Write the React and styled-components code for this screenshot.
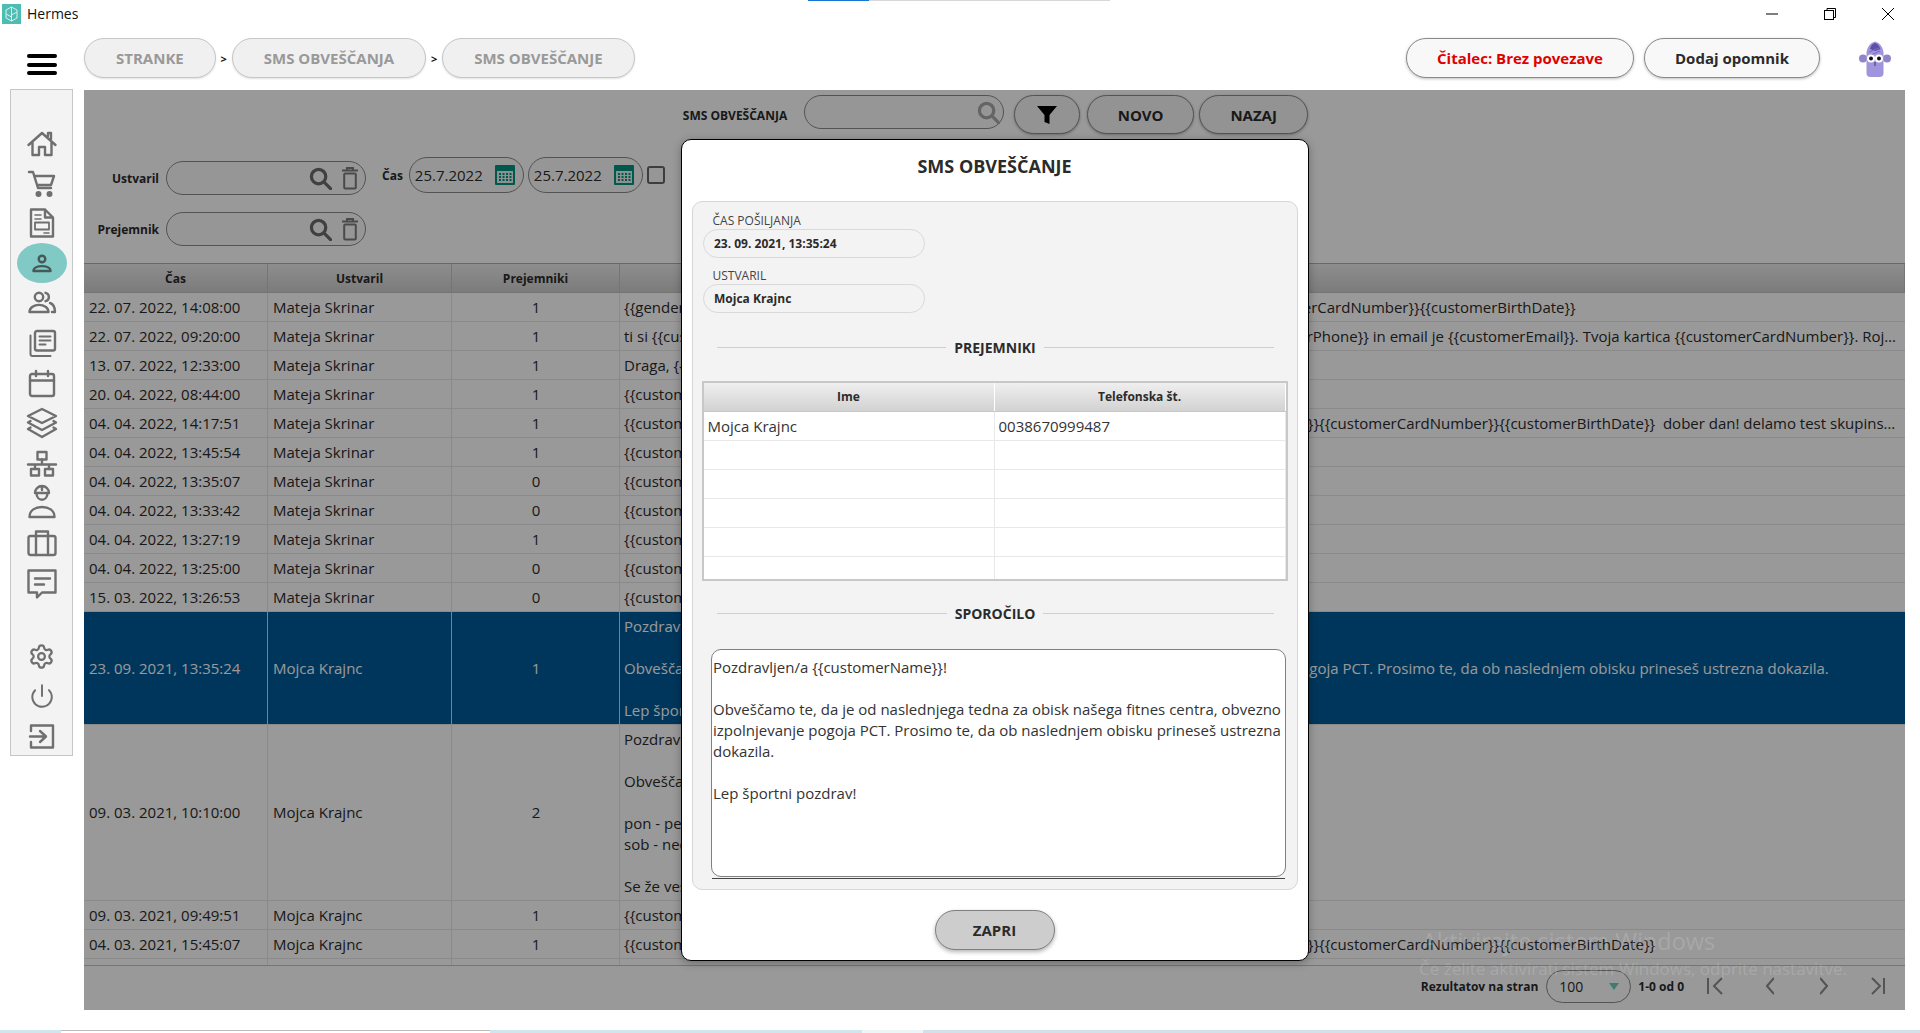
import React from 'react';
import styled, { createGlobalStyle } from 'styled-components';
import { Settings, Power } from 'lucide-react';

const GlobalStyle = createGlobalStyle`
  html, body { margin: 0; padding: 0; height: 100%; overflow: hidden; background: #fff; }
  body { font-family: 'Open Sans', 'Noto Sans', sans-serif; color: #2b2b2b; }
  * { box-sizing: border-box; }
`;

const Page = styled.div`
  position: relative;
  height: 100vh;
  display: flex;
  flex-direction: column;
  overflow: hidden;
`;

const LoadStrip = styled.div`
  position: absolute;
  top: 0;
  left: 808px;
  width: 302px;
  height: 1px;
  background: linear-gradient(90deg, #1577d2 0 61px, #d8d8d8 61px);
`;

const TitleBar = styled.div`
  height: 30px;
  flex: none;
  display: flex;
  align-items: center;
  padding: 0 3px 3px 2px;
`;

const AppTitle = styled.span`
  margin-left: 6px;
  font-size: 14px;
  color: #111;
`;

const WinControls = styled.div`
  margin-left: auto;
  display: flex;
`;

const WinBtn = styled.div`
  width: 58px;
  height: 27px;
  display: flex;
  align-items: center;
  justify-content: center;
`;

const TopBar = styled.div`
  height: 60px;
  flex: none;
  display: flex;
  align-items: flex-start;
  padding: 8px 29px 0 27px;
`;

const Burger = styled.div`
  width: 30px;
  margin: 16px 27px 0 0;
  display: flex;
  flex-direction: column;
  gap: 4.5px;
  span {
    height: 4px;
    border-radius: 2px;
    background: #000;
  }
`;

const Crumb = styled.div`
  height: 40px;
  padding: 0 31px;
  display: flex;
  align-items: center;
  border: 1px solid #c6c6c6;
  border-radius: 20px;
  background: #f0f0f0;
  color: #999;
  font-size: 15px;
  font-weight: 700;
  box-shadow: 0 1px 2px rgba(0, 0, 0, 0.12);
`;

const CrumbSep = styled.span`
  width: 16px;
  height: 40px;
  display: flex;
  align-items: center;
  justify-content: center;
  font-size: 11px;
  font-weight: 700;
  color: #111;
`;

const TopActions = styled.div`
  margin-left: auto;
  display: flex;
  align-items: flex-start;
  gap: 10px;
`;

const TopBtn = styled.div`
  height: 40px;
  width: ${(p) => p.$w}px;
  display: flex;
  align-items: center;
  justify-content: center;
  border: 1px solid #8a8a8a;
  border-radius: 20px;
  background: #f8f8f8;
  color: ${(p) => p.$color || '#2b2b2b'};
  font-size: 15px;
  font-weight: 700;
  box-shadow: 0 1px 3px rgba(0, 0, 0, 0.25);
`;

const Avatar = styled.svg`
  margin: 2px 0 0 29px;
  flex: none;
`;

const Body = styled.div`
  flex: 1;
  min-height: 0;
  display: flex;
  align-items: flex-start;
  padding: 0 15px 0 10px;
  gap: 11px;
`;

const Sidebar = styled.nav`
  width: 63px;
  flex: none;
  height: 667px;
  margin-top: -1px;
  padding-top: 34.4px;
  background: #f3f3f3;
  border: 1px solid #c6c6c6;
  display: flex;
  flex-direction: column;
  align-items: center;
`;

const NavSlot = styled.div`
  height: 39.6px;
  width: 100%;
  flex: none;
  display: flex;
  align-items: center;
  justify-content: center;
  color: #6f6f6f;
`;

const ActivePill = styled.div`
  width: 50px;
  height: 40px;
  border-radius: 25px / 20px;
  background: #80c9c4;
  color: #46595a;
  display: flex;
  align-items: center;
  justify-content: center;
`;

const NavGap = styled.div`
  height: 37px;
  flex: none;
`;

const NavIcon = styled.svg`
  overflow: visible;
  fill: none;
  stroke: currentColor;
  stroke-width: 2.4;
  stroke-linejoin: round;
  stroke-linecap: round;
`;

const Main = styled.main`
  position: relative;
  flex: 1;
  height: 920px;
  background: #fff;
  display: flex;
  flex-direction: column;
  overflow: hidden;
`;

const SearchRow = styled.div`
  margin-top: 5px;
  padding-left: 2px;
  height: 39px;
  flex: none;
  display: flex;
  justify-content: center;
  align-items: flex-start;
`;

const SearchLabel = styled.span`
  height: 40px;
  display: flex;
  align-items: center;
  margin-right: 17px;
  font-size: 12px;
  font-weight: 700;
  white-space: nowrap;
`;

const Pill = styled.div`
  width: ${(p) => p.$w}px;
  height: ${(p) => p.$h || 34}px;
  flex: none;
  display: flex;
  align-items: center;
  justify-content: flex-end;
  padding: 0 ${(p) => p.$pr || 6}px 0 6px;
  gap: 9px;
  border: 1px solid #8a8a8a;
  border-radius: 18px;
  background: #fbfbfb;
`;

const ToolBtn = styled.div`
  width: ${(p) => p.$w}px;
  height: 39px;
  margin-left: ${(p) => p.$ml}px;
  flex: none;
  display: flex;
  align-items: center;
  justify-content: center;
  border: 1px solid #8a8a8a;
  border-radius: 20px;
  background: #f6f6f6;
  font-size: 15px;
  font-weight: 700;
  box-shadow: 0 1px 3px rgba(0, 0, 0, 0.3);
`;

const Filters = styled.div`
  margin-top: 23px;
  height: 106px;
  flex: none;
  display: flex;
  align-items: flex-start;
  gap: 16px;
`;

const FilterCol = styled.div`
  padding-top: 4px;
  display: flex;
  flex-direction: column;
  gap: 17px;
`;

const FilterRow = styled.div`
  display: grid;
  grid-template-columns: 75px 200px;
  gap: 7px;
  align-items: center;
`;

const FilterLabel = styled.label`
  text-align: right;
  font-size: 12px;
  font-weight: 700;
`;

const DateGroup = styled.div`
  display: flex;
  align-items: center;
  gap: 4px;
  ${FilterLabel} { margin-right: 2px; }
`;

const DatePill = styled(Pill)`
  justify-content: space-between;
  padding: 0 8px 0 5px;
  font-size: 15px;
`;

const CheckBox = styled.div`
  width: 18px;
  height: 18px;
  border: 2px solid #666;
  border-radius: 3px;
  background: #fbfbfb;
`;

const Table = styled.div`
  flex: 1;
  min-height: 0;
  display: flex;
  flex-direction: column;
`;

const HeadRow = styled.div`
  height: 30px;
  flex: none;
  display: grid;
  grid-template-columns: 184px 184px 168px 1fr;
  background: linear-gradient(#ececec, #cecece);
  border-top: 1px solid #b0b0b0;
  border-bottom: 1px solid #c4c4c4;
`;

const HeadCell = styled.div`
  display: flex;
  align-items: center;
  justify-content: center;
  font-size: 12px;
  font-weight: 700;
  border-right: 1px solid #c4c4c4;
`;

const RowList = styled.div`
  flex: 1;
  min-height: 0;
  overflow: hidden;
`;

const Row = styled.div`
  height: ${(p) => p.$h}px;
  display: grid;
  grid-template-columns: 184px 184px 168px minmax(0, 1fr);
  font-size: 15px;
  line-height: 21px;
  background: ${(p) => (p.$sel ? '#005a99' : '#fff')};
  color: ${(p) => (p.$sel ? '#fff' : '#2b2b2b')};
  border-bottom: 1px solid #e6e6e6;
`;

const Cell = styled.div`
  display: flex;
  align-items: center;
  padding: 0 4px 0 5px;
  justify-content: ${(p) => (p.$center ? 'center' : 'flex-start')};
  border-right: 1px solid ${(p) => (p.$sel ? '#c8d8e4' : '#e6e6e6')};
  white-space: nowrap;
`;

const MsgCell = styled.div`
  align-self: center;
  padding: 0 8px 0 4px;
  white-space: pre;
  overflow: hidden;
  text-overflow: ellipsis;
`;

const Footer = styled.div`
  height: 45px;
  flex: none;
  border-top: 1px solid #c4c4c4;
  display: flex;
  align-items: center;
  justify-content: flex-end;
  padding: 0 20px 4px 0;
`;

const FootLabel = styled.span`
  font-size: 12px;
  font-weight: 700;
`;

const PageSelect = styled.div`
  width: 85px;
  height: 33px;
  margin: 0 7px 0 8px;
  padding: 0 11px 0 12px;
  display: flex;
  align-items: center;
  justify-content: space-between;
  border: 1px solid #8a8a8a;
  border-radius: 17px;
  font-size: 14px;
`;

const Caret = styled.span`
  width: 0;
  height: 0;
  border-left: 5px solid transparent;
  border-right: 5px solid transparent;
  border-top: 7px solid #66d0c0;
`;

const Pager = styled.svg`
  margin-left: ${(p) => p.$ml}px;
  fill: none;
  stroke: #8c8c8c;
  stroke-width: 2;
`;

const Overlay = styled.div`
  position: absolute;
  inset: 0;
  padding-bottom: 1px;
  background: rgba(0, 0, 0, 0.4);
  display: flex;
  align-items: center;
  justify-content: center;
`;

const Modal = styled.div`
  width: 628px;
  height: 822px;
  padding: 0 10px;
  background: #fff;
  border: 1px solid #000;
  border-radius: 10px;
  display: flex;
  flex-direction: column;
  box-shadow: 0 2px 8px rgba(0, 0, 0, 0.3);
`;

const ModalTitle = styled.h2`
  height: 61px;
  flex: none;
  margin: 0;
  padding-bottom: 9px;
  display: flex;
  align-items: center;
  justify-content: center;
  font-size: 18px;
  font-weight: 700;
`;

const ModalPanel = styled.div`
  height: 689px;
  flex: none;
  padding: 11px 9px 0;
  background: #f3f3f3;
  border: 1px solid #d6d6d6;
  border-radius: 10px;
`;

const FieldLabel = styled.div`
  height: 16px;
  padding-left: 11px;
  font-size: 12px;
  line-height: 16px;
  color: #444;
`;

const FieldValue = styled.div`
  width: 222px;
  height: 29px;
  margin: 0 0 10px 1.5px;
  padding-left: 10px;
  display: flex;
  align-items: center;
  border: 1px solid #d9d9d9;
  border-radius: 15px;
  font-size: 12px;
  font-weight: 700;
`;

const Divider = styled.div`
  margin: ${(p) => p.$mt}px 14px ${(p) => p.$mb}px 15px;
  height: 20px;
  display: flex;
  align-items: center;
  gap: 8px;
  font-size: 14px;
  font-weight: 700;
  &::before, &::after {
    content: '';
    flex: 1;
    height: 1px;
    background: #cfcfcf;
  }
`;

const SubTable = styled.div`
  height: 200px;
  background: #fff;
  border: 2px solid #c8c8c8;
  overflow: hidden;
`;

const SubHead = styled.div`
  height: 29px;
  display: grid;
  grid-template-columns: 291px 1fr;
  background: linear-gradient(#efefef, #d2d2d2);
  border-bottom: 1px solid #c8c8c8;
`;

const SubHeadCell = styled.div`
  display: flex;
  align-items: center;
  justify-content: center;
  font-size: 12px;
  font-weight: 700;
  border-right: 1px solid #fff;
`;

const SubRow = styled.div`
  height: 29px;
  display: grid;
  grid-template-columns: 291px 1fr;
  border-bottom: 1px solid #e8e8e8;
`;

const SubCell = styled.div`
  padding-left: 4px;
  display: flex;
  align-items: center;
  font-size: 15px;
  color: #333;
  border-right: 1px solid #e8e8e8;
`;

const MessageBox = styled.div`
  width: 575px;
  height: 228px;
  margin-left: 9.5px;
  padding: 7px 1px;
  background: #fff;
  border: 1px solid #808080;
  border-radius: 10px;
  font-size: 15px;
  line-height: 21px;
  color: #333;
  white-space: pre-wrap;
`;

const MessageLine = styled.div`
  width: 573px;
  height: 1px;
  margin: 1px 0 0 10.5px;
  background: #444;
`;

const ModalFoot = styled.div`
  flex: 1;
  display: flex;
  justify-content: center;
  padding-top: 20px;
`;

const CloseBtn = styled.div`
  width: 120px;
  height: 40px;
  display: flex;
  align-items: center;
  justify-content: center;
  border: 1px solid #808080;
  border-radius: 20px;
  background: #cdcdcd;
  font-size: 15px;
  font-weight: 700;
  box-shadow: 0 2px 4px rgba(0, 0, 0, 0.3);
`;

const Watermark = styled.div`
  position: absolute;
  top: 835px;
  right: 60px;
  width: 426px;
  color: rgba(255, 255, 255, 0.16);
  pointer-events: none;
  white-space: nowrap;
  div:first-child { font-size: 23.5px; line-height: 32px; margin-left: 3px; }
  div:last-child { font-size: 17px; line-height: 24px; }
`;

const BottomStrip = styled.div`
  height: 3px;
  flex: none;
  margin-top: auto;
  display: flex;
`;

const StripPart = styled.div`
  width: ${(p) => p.$w};
  flex: ${(p) => (p.$w ? 'none' : 1)};
  background: ${(p) => p.$bg};
  border-top: ${(p) => (p.$line ? '1px solid #bbb' : 'none')};
`;

const AppLogo = () => (
  <svg width="19" height="20" viewBox="0 0 19 20">
    <rect width="19" height="20" fill="#4dbcb2" />
    <path d="M9.5 3 4 6v8l5.5 3 5.5-3V6zM9.5 3v14M4 10l5.5 3M15 8l-5.5 3" fill="none" stroke="#d9f2ef" strokeWidth="1" />
  </svg>
);

const MinIcon = () => (
  <svg width="12" height="12" viewBox="0 0 12 12"><path d="M0 6h12" stroke="#000" strokeWidth="1" /></svg>
);
const MaxIcon = () => (
  <svg width="12" height="12" viewBox="0 0 12 12" fill="none" stroke="#000" strokeWidth="1">
    <rect x="0.5" y="2.5" width="9" height="9" />
    <path d="M3 2.5V.5h8.5v9H9.5" />
  </svg>
);
const CloseIcon = () => (
  <svg width="12" height="12" viewBox="0 0 12 12"><path d="M0 0l12 12M12 0 0 12" stroke="#000" strokeWidth="1" /></svg>
);

const MagIcon = ({ size = 23, color = '#6c6c6c' }) => (
  <svg width={size} height={size} viewBox="0 0 24 24" fill="none" stroke={color} strokeWidth="3.4" strokeLinecap="round" style={{ flex: 'none' }}>
    <circle cx="10" cy="10" r="7.5" />
    <path d="m16 16 6.5 6.5" />
  </svg>
);

const BinIcon = () => (
  <svg width="18" height="24" viewBox="0 0 18 24" fill="none" stroke="#7c7c7c" strokeWidth="2" style={{ flex: 'none' }}>
    <path d="M1 4.500h16M6 4V2h6v2" />
    <rect x="3.2" y="7.500" width="11.600" height="15" rx="1" />
  </svg>
);

const CalIcon = () => (
  <svg width="20" height="20" viewBox="0 0 20 20" style={{ flex: 'none' }}>
    <rect width="20" height="20" rx="1" fill="#00947f" />
    <rect x="2" y="6" width="16" height="12" fill="#e9f2f0" />
    <path d="M4 8h2v2H4zM7.5 8h2v2h-2zM11 8h2v2h-2zM14.500 8h2v2h-2zM4 11h2v2H4zM7.500 11h2v2h-2zM11 11h2v2h-2zM14.500 11h2v2h-2zM4 14h2v2H4zM7.500 14h2v2h-2zM11 14h2v2h-2zM14.500 14h2v2h-2z" fill="#00947f" />
  </svg>
);

const FilterIcon = () => (
  <svg width="20" height="20" viewBox="0 0 20 20"><path d="M0 1h20l-7.500 9v9l-5-2v-7z" fill="#000" /></svg>
);

const Mascot = () => (
  <Avatar width="32" height="38" viewBox="0 0 32 38">
    <circle cx="4" cy="18.500" r="4" fill="#8f85c9" />
    <circle cx="28" cy="18.500" r="4" fill="#8f85c9" />
    <path d="M7.500 12Q8.500 4 16 1.500 23.500 4 24.500 12V33q0 4-4 4h-9q-4 0-4-4z" fill="#a095dc" />
    <path d="M12 6q4-6 8 0l1.500 3-5 2-5.500-2z" fill="#5c4fa6" />
    <path d="M10 12l10-4M12 15l9-4" stroke="#7a6cc0" strokeWidth="1" />
    <circle cx="12" cy="18.500" r="4" fill="#fff" />
    <circle cx="20" cy="18.500" r="4" fill="#fff" />
    <circle cx="12" cy="18.500" r="2" fill="#111" />
    <circle cx="20" cy="18.500" r="2" fill="#111" />
    <path d="M16 22v4" stroke="#3d3470" strokeWidth="1" />
  </Avatar>
);

// dy premakne ikono znotraj vrstice, ker ikone v meniju niso enakomerno razporejene
const Ico = ({ dy = 0, children }) => (
  <NavIcon width="30" height="40" viewBox={`0 ${-5 - dy} 30 40`}>{children}</NavIcon>
);

const NAV_TOP = [
  <Ico key="home"><path d="M1.500 16 15 4l13.500 12M5.500 13v13H12v-8h6v8h6.500V13M21 7V4h3v6" /></Ico>,
  <Ico key="cart">
    <path d="M2 3h4l5 16h13M7.500 7H27l-3 9H10.500" />
    <circle cx="11.500" cy="25" r="1.800" fill="currentColor" />
    <circle cx="22.500" cy="25" r="1.800" fill="currentColor" />
  </Ico>,
  <Ico key="doc">
    <path d="M4 1.500h14l8 8V28.500H4zM18 1.500v8h8" />
    <path d="M8 7h6M8 11h6M17 25h5" strokeWidth="1.600" />
    <rect x="8" y="14.500" width="14" height="7" strokeWidth="1.800" />
  </Ico>,
  <ActivePill key="me">
    <NavIcon width="30" height="30" viewBox="0 0 30 30">
      <circle cx="15" cy="11" r="3.300" />
      <path d="M6.500 23c0-6.500 17-6.500 17 0z" />
    </NavIcon>
  </ActivePill>,
  <Ico key="users" dy={1}>
    <circle cx="12" cy="8" r="4.200" />
    <path d="M2.500 23c0-9.500 19-9.500 19 0zM18.500 3.800a4.300 4.300 0 0 1 0 8.400M23 14c3 1 5 4 5 9h-3" />
  </Ico>,
  <Ico key="news" dy={1.500}>
    <rect x="8" y="2.500" width="20" height="19.500" rx="2" />
    <path d="M12.500 8h11M12.500 12h11M12.500 16h6M3.500 7v18.500a2 2 0 0 0 2 2h18" strokeWidth="2" />
  </Ico>,
  <Ico key="cal" dy={2}>
    <rect x="3" y="5" width="24" height="22" rx="2" />
    <path d="M3 11.500h24M9 2v5M21 2v5" />
  </Ico>,
  <Ico key="layers" dy={2}>
    <path d="M15 1 29 8 15 15 1 8zM3.500 13 1 14.500 15 22l14-7.500L26.500 13M3.500 19.500 1 21l14 8 14-8-2.500-1.500" />
  </Ico>,
  <Ico key="net" dy={3}>
    <rect x="10.500" y="3" width="9" height="7.500" />
    <path d="M15 10.500V15M1 15.500h28M8 15.500V20M22 15.500V20" />
    <rect x="4" y="20" width="8" height="6.500" />
    <rect x="18" y="20" width="8" height="6.500" />
  </Ico>,
  <Ico key="worker" dy={-1}>
    <path d="M8 8a7 7 0 0 1 14 0zM15 1v4M9.500 8c0 9 11 9 11 0" />
    <path d="M2.500 32c0-7 6-10 12.500-10s12.500 3 12.500 10z" />
  </Ico>,
  <Ico key="bag" dy={3}>
    <rect x="1.500" y="8" width="27" height="19" rx="2" />
    <path d="M9 8V3.500h12V8M9 8v19M21 8v19" />
  </Ico>,
  <Ico key="chat" dy={3.500}>
    <path d="M1.500 2h27v22H15l-5 5v-5H1.500z" />
    <path d="M8 10h15M8 16h9" />
  </Ico>,
];

const NAV_BOTTOM = [
  <Settings key="gear" size={27} strokeWidth={2} />,
  <Power key="power" size={26} strokeWidth={1.8} />,
  <Ico key="exit" dy={1}>
    <path d="M4 9V3.500h22v22H4V20M3 14.500h15M13 9l6 5.500L13 20" />
  </Ico>,
];

const FULL = '{{customerName}}{{customerSurname}}{{customerEmail}}{{customerPhone}}{{customerCardNumber}}{{customerBirthDate}}';
const LONG = '{{customerId}}{{title}}' + FULL;
const SHORT = '{{customerName}}';

const SELECTED_MSG = 'Pozdravljen/a {{customerName}}!\n\nObveščamo te, da je od naslednjega tedna za obisk našega fitnes centra, obvezno izpolnjevanje pogoja PCT. Prosimo te, da ob naslednjem obisku prineseš ustrezna dokazila.\n\nLep športni pozdrav!';

const ROWS = [
  { t: '22. 07. 2022, 14:08:00', u: 'Mateja Skrinar', n: 1, m: '{{gender}}' + FULL },
  { t: '22. 07. 2022, 09:20:00', u: 'Mateja Skrinar', n: 1, m: 'ti si {{customerName}} {{customerSurname}}, star si {{customerAge}} let, tvoj telefon je {{customerPhone}} in email je {{customerEmail}}. Tvoja kartica {{customerCardNumber}}. Rojstni datum pa je {{customerBirthDate}}.' },
  { t: '13. 07. 2022, 12:33:00', u: 'Mateja Skrinar', n: 1, m: 'Draga, {{customerName}}' },
  { t: '20. 04. 2022, 08:44:00', u: 'Mateja Skrinar', n: 1, m: SHORT },
  { t: '04. 04. 2022, 14:17:51', u: 'Mateja Skrinar', n: 1, m: LONG + '  dober dan! delamo test skupinskega obveščanja.' },
  { t: '04. 04. 2022, 13:45:54', u: 'Mateja Skrinar', n: 1, m: SHORT },
  { t: '04. 04. 2022, 13:35:07', u: 'Mateja Skrinar', n: 0, m: SHORT },
  { t: '04. 04. 2022, 13:33:42', u: 'Mateja Skrinar', n: 0, m: SHORT },
  { t: '04. 04. 2022, 13:27:19', u: 'Mateja Skrinar', n: 1, m: SHORT },
  { t: '04. 04. 2022, 13:25:00', u: 'Mateja Skrinar', n: 0, m: SHORT },
  { t: '15. 03. 2022, 13:26:53', u: 'Mateja Skrinar', n: 0, m: SHORT },
  { t: '23. 09. 2021, 13:35:24', u: 'Mojca Krajnc', n: 1, m: SELECTED_MSG, h: 113, sel: true },
  { t: '09. 03. 2021, 10:10:00', u: 'Mojca Krajnc', n: 2, m: 'Pozdravljeni!\n\nObveščamo vas\n\npon - pet: 6:00 - 22:00\nsob - ned: 8:00 - 20:00\n\nSe že veselimo', h: 176 },
  { t: '09. 03. 2021, 09:49:51', u: 'Mojca Krajnc', n: 1, m: SHORT },
  { t: '04. 03. 2021, 15:45:07', u: 'Mojca Krajnc', n: 1, m: LONG },
  { t: '', u: '', n: '', m: '' },
];

const App = () => {
  return (
    <Page>
      <GlobalStyle />
      <LoadStrip />

      <TitleBar>
        <AppLogo />
        <AppTitle>Hermes</AppTitle>
        <WinControls>
          <WinBtn><MinIcon /></WinBtn>
          <WinBtn><MaxIcon /></WinBtn>
          <WinBtn><CloseIcon /></WinBtn>
        </WinControls>
      </TitleBar>

      <TopBar>
        <Burger><span /><span /><span /></Burger>
        <Crumb>STRANKE</Crumb>
        <CrumbSep>&gt;</CrumbSep>
        <Crumb>SMS OBVEŠČANJA</Crumb>
        <CrumbSep>&gt;</CrumbSep>
        <Crumb>SMS OBVEŠČANJE</Crumb>
        <TopActions>
          <TopBtn $w={228} $color="#e00000">Čitalec: Brez povezave</TopBtn>
          <TopBtn $w={176}>Dodaj opomnik</TopBtn>
          <Mascot />
        </TopActions>
      </TopBar>

      <Body>
        <Sidebar>
          {NAV_TOP.map((icon) => <NavSlot key={icon.key}>{icon}</NavSlot>)}
          <NavGap />
          {NAV_BOTTOM.map((icon) => <NavSlot key={icon.key}>{icon}</NavSlot>)}
        </Sidebar>

        <Main>
          <SearchRow>
            <SearchLabel>SMS OBVEŠČANJA</SearchLabel>
            <Pill $w={200} $pr={3}><MagIcon size={23} color="#a8a8a8" /></Pill>
            <ToolBtn $w={66} $ml={10}><FilterIcon /></ToolBtn>
            <ToolBtn $w={107} $ml={7}>NOVO</ToolBtn>
            <ToolBtn $w={109} $ml={5}>NAZAJ</ToolBtn>
          </SearchRow>

          <Filters>
            <FilterCol>
              <FilterRow>
                <FilterLabel>Ustvaril</FilterLabel>
                <Pill $w={200}><MagIcon /><BinIcon /></Pill>
              </FilterRow>
              <FilterRow>
                <FilterLabel>Prejemnik</FilterLabel>
                <Pill $w={200}><MagIcon /><BinIcon /></Pill>
              </FilterRow>
            </FilterCol>
            <DateGroup>
              <FilterLabel>Čas</FilterLabel>
              <DatePill $w={115} $h={36}>25.7.2022<CalIcon /></DatePill>
              <DatePill $w={115} $h={36}>25.7.2022<CalIcon /></DatePill>
              <CheckBox />
            </DateGroup>
          </Filters>

          <Table>
            <HeadRow>
              <HeadCell>Čas</HeadCell>
              <HeadCell>Ustvaril</HeadCell>
              <HeadCell>Prejemniki</HeadCell>
              <HeadCell>Sporočilo</HeadCell>
            </HeadRow>
            <RowList>
              {ROWS.map((r, i) => (
                <Row key={i} $h={r.h || 29} $sel={r.sel}>
                  <Cell $sel={r.sel}>{r.t}</Cell>
                  <Cell $sel={r.sel}>{r.u}</Cell>
                  <Cell $sel={r.sel} $center>{r.n}</Cell>
                  <MsgCell>{r.m}</MsgCell>
                </Row>
              ))}
            </RowList>
            <Footer>
              <FootLabel>Rezultatov na stran</FootLabel>
              <PageSelect>100<Caret /></PageSelect>
              <FootLabel>1-0 od 0</FootLabel>
              <Pager $ml={23} width="16" height="18" viewBox="0 0 16 18"><path d="M1 1v16M15 1 7 9l8 8" /></Pager>
              <Pager $ml={43} width="8" height="18" viewBox="0 0 8 18"><path d="M8 1 1 9l7 8" /></Pager>
              <Pager $ml={46} width="8" height="18" viewBox="0 0 8 18"><path d="m0 1 7 8-7 8" /></Pager>
              <Pager $ml={43} width="14" height="18" viewBox="0 0 14 18"><path d="m1 1 8 8-8 8M13 1v16" /></Pager>
            </Footer>
          </Table>

          <Overlay>
            <Modal>
              <ModalTitle>SMS OBVEŠČANJE</ModalTitle>
              <ModalPanel>
                <FieldLabel>ČAS POŠILJANJA</FieldLabel>
                <FieldValue>23. 09. 2021, 13:35:24</FieldValue>
                <FieldLabel>USTVARIL</FieldLabel>
                <FieldValue>Mojca Krajnc</FieldValue>

                <Divider $mt={25} $mb={23}>PREJEMNIKI</Divider>
                <SubTable>
                  <SubHead>
                    <SubHeadCell>Ime</SubHeadCell>
                    <SubHeadCell>Telefonska št.</SubHeadCell>
                  </SubHead>
                  <SubRow>
                    <SubCell>Mojca Krajnc</SubCell>
                    <SubCell>0038670999487</SubCell>
                  </SubRow>
                  {[0, 1, 2, 3, 4].map((i) => (
                    <SubRow key={i}><SubCell /><SubCell /></SubRow>
                  ))}
                </SubTable>

                <Divider $mt={23} $mb={25}>SPOROČILO</Divider>
                <MessageBox>{SELECTED_MSG}</MessageBox>
                <MessageLine />
              </ModalPanel>
              <ModalFoot>
                <CloseBtn>ZAPRI</CloseBtn>
              </ModalFoot>
            </Modal>
          </Overlay>

          <Watermark>
            <div>Aktivirajte sistem Windows</div>
            <div>Če želite aktivirati sistem Windows, odprite nastavitve.</div>
          </Watermark>
        </Main>
      </Body>

      <BottomStrip>
        <StripPart $w="61px" $bg="#d0e6ef" />
        <StripPart $w="429px" $bg="#fff" $line />
        <StripPart $w="372px" $bg="#d0e6ef" />
        <StripPart $w="61px" $bg="#eef5f8" />
        <StripPart $bg="#d1e1ec" />
      </BottomStrip>
    </Page>
  );
};

export default App;
